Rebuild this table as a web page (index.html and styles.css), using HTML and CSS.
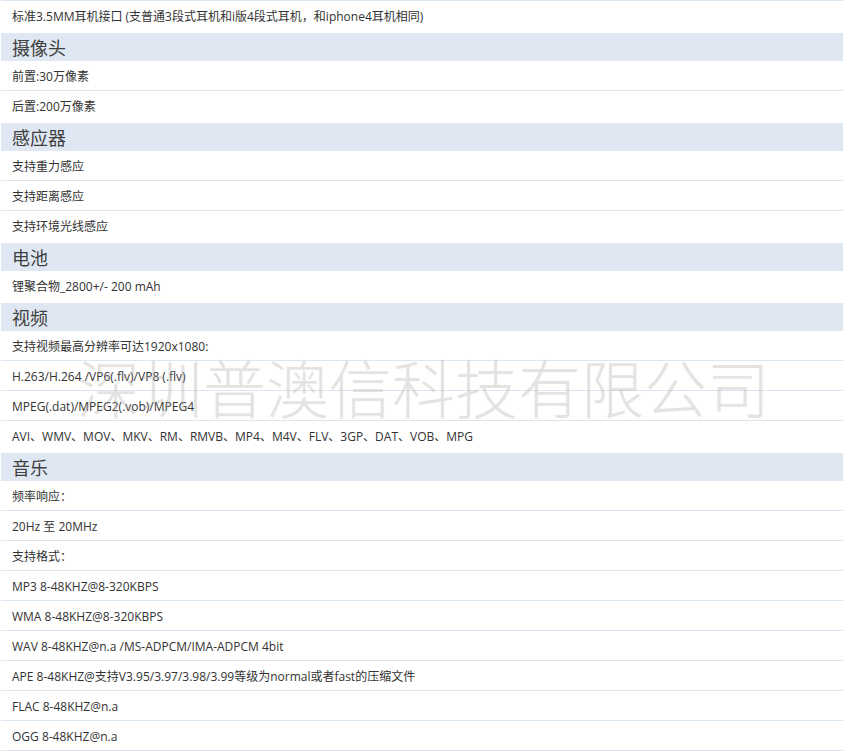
FILE: index.html
```html
<!DOCTYPE html>
<html lang="zh-CN">
<head>
<meta charset="utf-8">
<title>规格参数</title>
<link rel="stylesheet" href="styles.css">
</head>
<body>
<div class="spec">
  <div class="row end">标准3.5MM耳机接口 (支普通3段式耳机和i版4段式耳机，和iphone4耳机相同)</div>
  <div class="head">摄像头</div>
  <div class="row">前置:30万像素</div>
  <div class="row end">后置:200万像素</div>
  <div class="head">感应器</div>
  <div class="row">支持重力感应</div>
  <div class="row">支持距离感应</div>
  <div class="row end">支持环境光线感应</div>
  <div class="head">电池</div>
  <div class="row end">锂聚合物_2800+/- 200 mAh</div>
  <div class="head">视频</div>
  <div class="row">支持视频最高分辨率可达1920x1080:</div>
  <div class="row">H.263/H.264 /VP6(.flv)/VP8 (.flv)</div>
  <div class="row">MPEG(.dat)/MPEG2(.vob)/MPEG4</div>
  <div class="row end">AVI、WMV、MOV、MKV、RM、RMVB、MP4、M4V、FLV、3GP、DAT、VOB、MPG</div>
  <div class="head">音乐</div>
  <div class="row">频率响应：</div>
  <div class="row">20Hz 至 20MHz</div>
  <div class="row">支持格式：</div>
  <div class="row">MP3 8-48KHZ@8-320KBPS</div>
  <div class="row">WMA 8-48KHZ@8-320KBPS</div>
  <div class="row">WAV 8-48KHZ@n.a /MS-ADPCM/IMA-ADPCM 4bit</div>
  <div class="row">APE 8-48KHZ@支持V3.95/3.97/3.98/3.99等级为normal或者fast的压缩文件</div>
  <div class="row">FLAC 8-48KHZ@n.a</div>
  <div class="row">OGG 8-48KHZ@n.a</div>
  <div class="watermark">深圳普澳信科技有限公司</div>
</div>
</body>
</html>
```

FILE: styles.css
```css
html, body {
  margin: 0;
  padding: 0;
  background: #ffffff;
}

body {
  font-family: "Open Sans", "Noto Sans CJK SC", sans-serif;
  color: #333333;
}

.spec {
  position: relative;
  display: flex;
  flex-direction: column;
  width: 842px;
  margin-left: 1px;
  border-top: 1px solid #dae6f1;
}

.row {
  height: 28px;
  padding-top: 1px;
  line-height: 29px;
  padding-left: 11px;
  font-size: 12px;
  border-bottom: 1px solid #dae6f1;
  white-space: nowrap;
}

.row.end {
  border-bottom-color: #ffffff;
}

.head {
  height: 28px;
  line-height: 28px;
  margin-top: 2px;
  padding-left: 11px;
  background: #dfe8f2;
  font-family: "Noto Sans CJK SC", sans-serif;
  font-size: 18px;
  color: #3f3f3f;
}

.watermark {
  position: absolute;
  left: 76px;
  top: 352px;
  font-family: "Noto Sans CJK SC", sans-serif;
  font-size: 63px;
  line-height: 66px;
  font-weight: 300;
  color: rgba(205, 205, 205, 0.2);
  text-shadow: 0 0 1px rgba(130, 130, 130, 0.18);
  pointer-events: none;
  white-space: nowrap;
}
```
